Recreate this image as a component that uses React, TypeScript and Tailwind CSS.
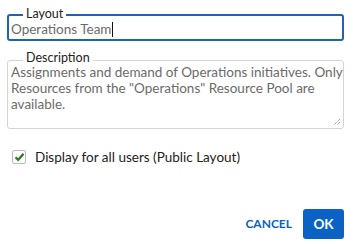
import React from "react";

const App = () => {
  return (
    <div
      className="w-[358px] h-[244px] bg-white relative"
      style={{ fontFamily: 'Lato, "Noto Sans", sans-serif' }}
    >
      <div className="pt-[11px] pl-[7px] pr-[14px]">
        <fieldset className="border-2 border-[#1d63b6] rounded-[3px] h-[30px] pl-[2px]">
          <legend className="relative -top-[1px] ml-[12px] px-[3px] text-[12.5px] leading-[8px] text-[#222]">
            Layout
          </legend>
          <div className="mt-[2px] text-[13.5px] leading-[16px] text-[#6b6b6b] flex items-center">
            Operations Team
            <span className="inline-block w-[1px] h-[15px] bg-[#111] ml-[1px]" />
          </div>
        </fieldset>

        <fieldset className="mt-[15px] border border-[#d4d4d4] rounded-[3px] h-[73px] pl-[3px] relative">
          <legend className="relative -top-[2px] ml-[12px] px-[3px] text-[12.5px] leading-[8px] text-[#222]">
            Description
          </legend>
          <div className="mt-[0px] text-[13.5px] leading-[16px] text-[#6b6b6b]">
            Assignments and demand of Operations initiatives. Only Resources
            from the "Operations" Resource Pool are available.
          </div>
          <svg
            className="absolute right-[2px] bottom-[2px]"
            width="8"
            height="8"
            viewBox="0 0 8 8"
          >
            <path d="M7 1 L1 7 M7 4 L4 7" stroke="#777" strokeWidth="1" strokeDasharray="1 1" />
          </svg>
        </fieldset>

        <label className="mt-[19px] ml-[5px] flex items-center gap-[9px]">
          <span className="w-[14px] h-[14px] border border-[#bdbdbd] rounded-[2px] bg-white flex items-center justify-center">
            <svg width="11" height="10" viewBox="0 0 11 10">
              <path
                d="M1.5 5.2 L4.2 7.8 L9.5 1.8"
                fill="none"
                stroke="#2f7a1f"
                strokeWidth="2.2"
              />
            </svg>
          </span>
          <span className="text-[13.5px] leading-[18px] text-[#222]">
            Display for all users (Public Layout)
          </span>
        </label>

        <div className="mt-[43px] flex justify-end items-center gap-[11px]">
          <button className="text-[12px] font-bold text-[#0b5fc0]">
            CANCEL
          </button>
          <button className="w-[41px] h-[30px] rounded-[3px] bg-[#0a62c4] text-white text-[13.5px] font-bold">
            OK
          </button>
        </div>
      </div>
    </div>
  );
};

export default App;
